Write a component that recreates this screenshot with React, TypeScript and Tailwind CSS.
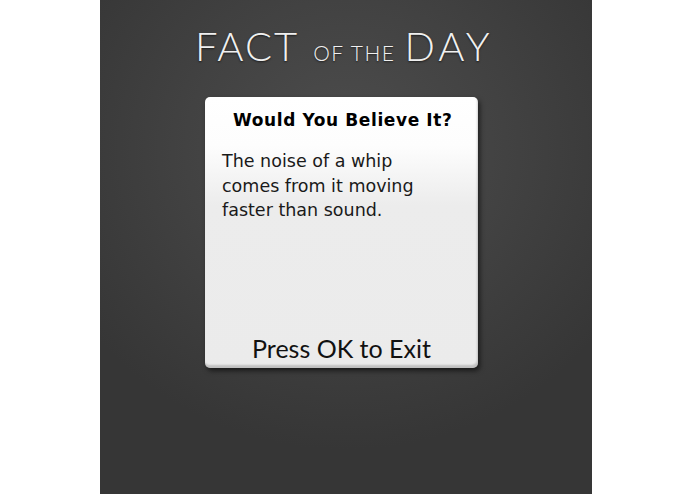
export default function App() {
  return (
    <div className="h-[494px] w-full bg-white">
      <div className="ml-[100px] h-[494px] w-[492px] bg-[radial-gradient(ellipse_320px_300px_at_50%_150px,#4d4d4d_0%,#424242_50%,#363636_100%)] pt-[26px]">
        {/* Title */}
        <div className="ml-[95px] flex w-[300px] items-baseline whitespace-nowrap text-[#f0f0f0] [text-shadow:0_1px_2px_rgba(0,0,0,0.6)]" style={{ fontFamily: "Lato, 'Open Sans', sans-serif", fontWeight: 300 }}>
          <span className="text-[40px] leading-[40px] tracking-[2px]">FACT</span>
          <span className="ml-[14px] text-[21px] leading-[40px] tracking-[1.5px]">OF THE</span>
          <span className="ml-[9px] text-[40px] leading-[40px] tracking-[4px]">DAY</span>
        </div>

        {/* Fact card */}
        <div className="ml-[105px] mt-[24px] flex h-[271px] w-[273px] flex-col rounded-[5px] bg-[linear-gradient(to_bottom,#ffffff_0%,#fdfdfd_18%,#ececec_40%,#ebebeb_100%)] shadow-[inset_-1px_-3px_2px_rgba(0,0,0,0.18),2px_3px_5px_rgba(0,0,0,0.55)]">
          <h2 className="mt-[13px] pl-[28px] text-[17px] font-bold leading-[20px] tracking-[0.6px] text-black [font-family:'DejaVu_Sans',sans-serif]">
            Would You Believe It?
          </h2>
          <p className="mt-[19px] w-[235px] pl-[17px] text-[17.5px] leading-[24.5px] text-[#1a1a1a] [font-family:'DejaVu_Sans',sans-serif]">
            The noise of a whip comes from it moving faster than sound.
          </p>
          <div
            className="mt-auto mb-[5px] text-center text-[25px] leading-[30px] text-[#111]"
            style={{ fontFamily: "Lato, 'Open Sans', sans-serif" }}
          >
            Press OK to Exit
          </div>
        </div>
      </div>
    </div>
  );
}
